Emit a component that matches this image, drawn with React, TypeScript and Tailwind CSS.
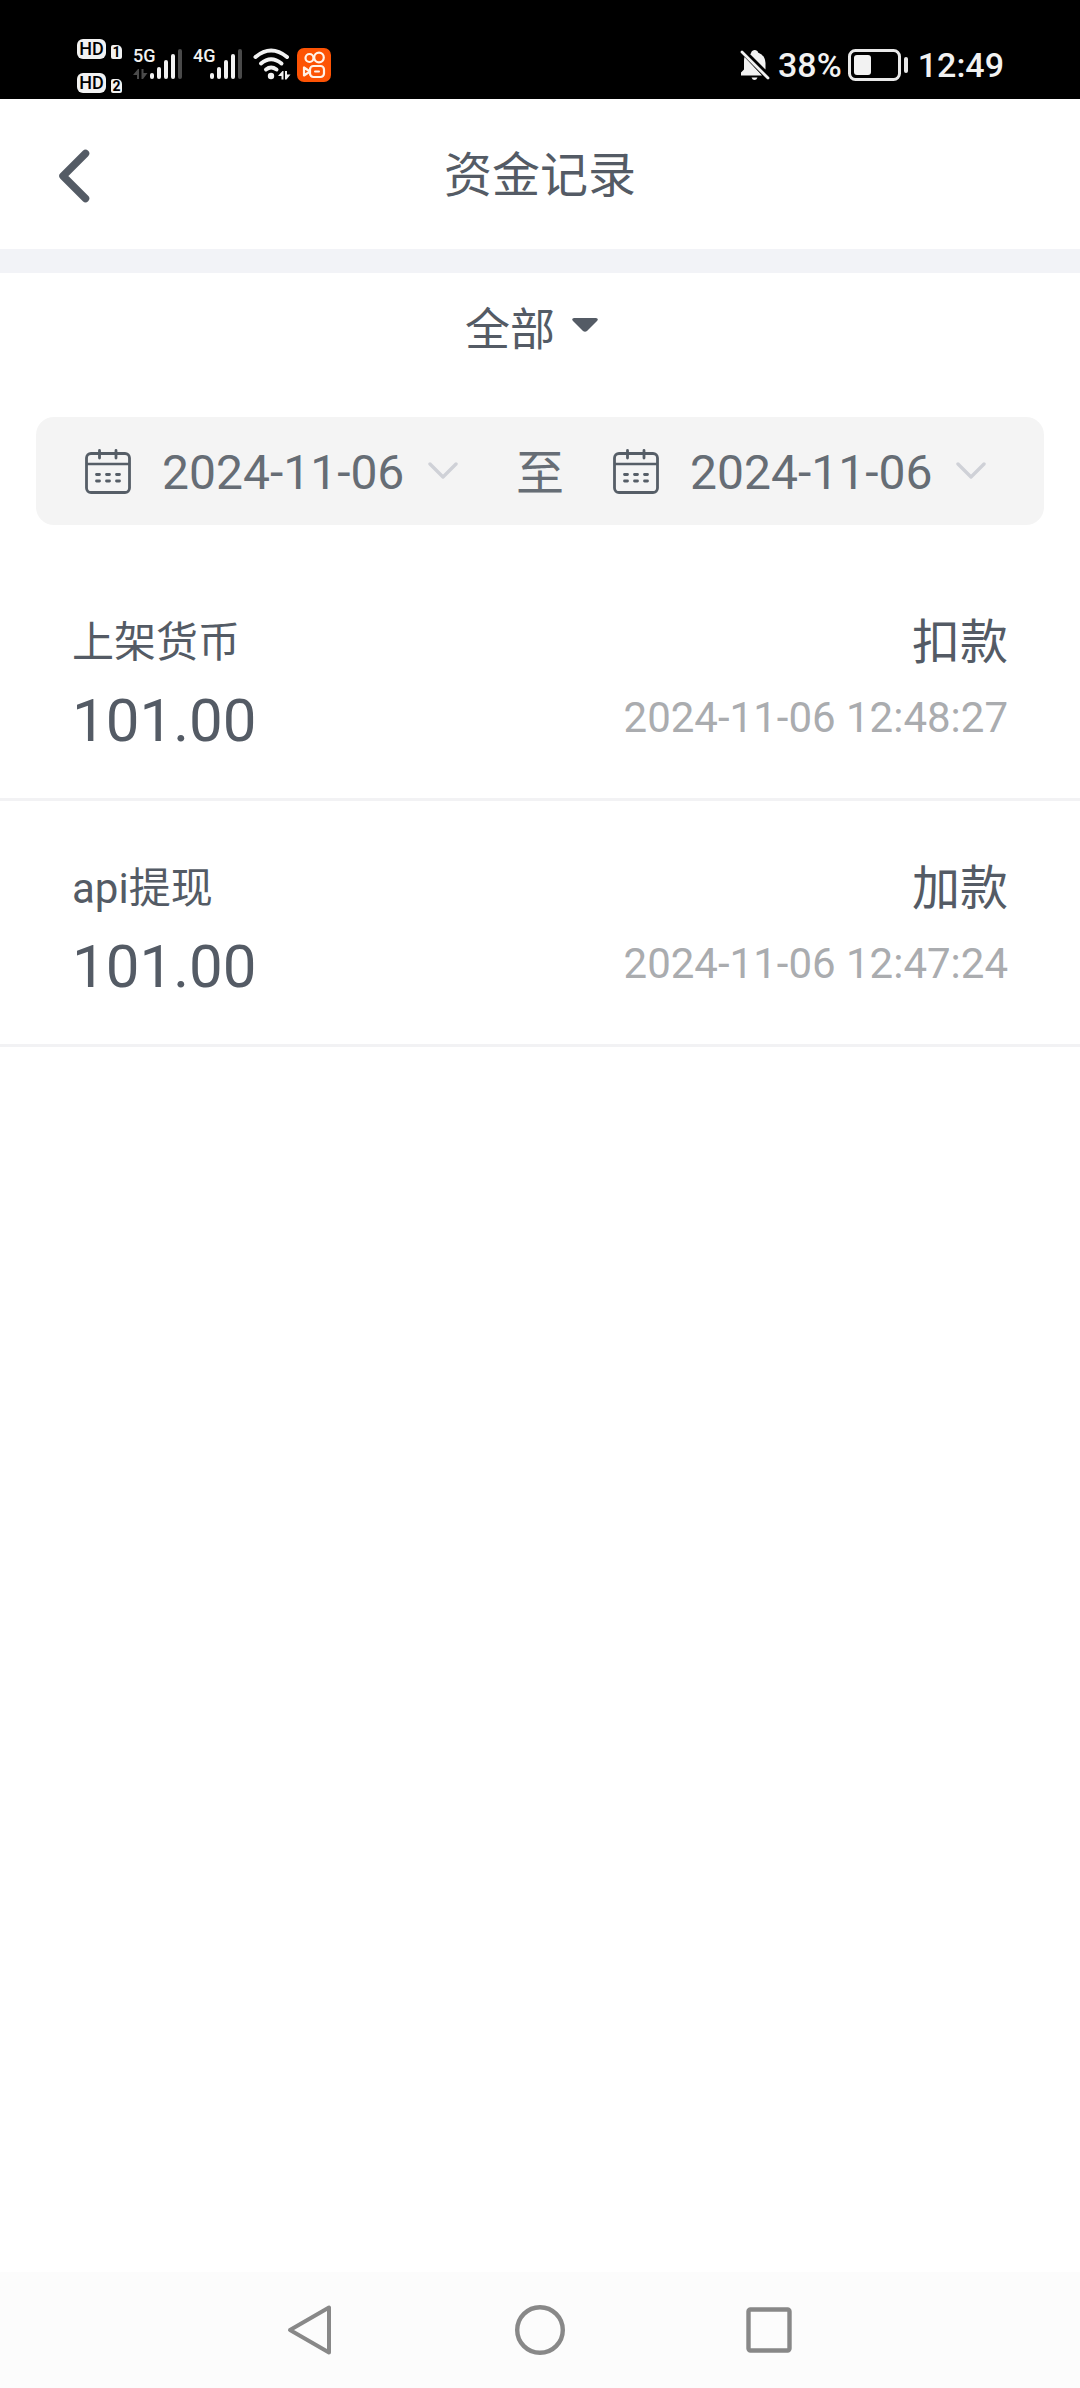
import React from 'react';

const records = [
  { id: 1, label: '上架货币', amount: '101.00', kind: '扣款', time: '2024-11-06 12:48:27' },
  { id: 2, label: 'api提现', amount: '101.00', kind: '加款', time: '2024-11-06 12:47:24' },
];

function HdBadge({ sim }: { sim: string }) {
  return (
    <div className="flex h-[21px] items-end gap-[5px]">
      <span className="flex h-5 w-[29px] items-center justify-center rounded-[6px] bg-[#f2f2f2] font-['Roboto',sans-serif] text-[18px] leading-5 font-medium text-black">
        HD
      </span>
      <span className="flex h-[14px] w-[11px] items-center justify-center rounded-[2px] rounded-tr-[5px] bg-[#f2f2f2] font-['Roboto',sans-serif] text-[14px] leading-[14px] font-bold text-black">
        {sim}
      </span>
    </div>
  );
}

function Signal({ label, arrows }: { label: string; arrows?: boolean }) {
  return (
    <svg width="50" height="46" viewBox="0 -6 50 46" aria-label={label} role="img">
      <text x="0" y="14" fill="#f2f2f2" className="font-['Roboto',sans-serif] text-[18px] font-medium">
        {label}
      </text>
      {arrows && (
        <g fill="#4a4a4a">
          <path d="M0 27 L5 21 L6 21 V31 H4 V27 Z" />
          <path d="M8.500 21 H10.500 V25 H14.500 L10 31 H8.500 Z" />
        </g>
      )}
      <g fill="#f2f2f2">
        <rect x="17" y="25" width="4" height="6" rx="2" />
        <rect x="24" y="19" width="4" height="12" rx="2" />
        <rect x="31" y="12" width="4" height="19" rx="2" />
        <rect x="38" y="6" width="4" height="25" rx="2" />
      </g>
      <rect x="45" y="1" width="4" height="30" rx="2" fill="#4a4a4a" />
    </svg>
  );
}

function WifiIcon() {
  return (
    <svg width="38" height="34" viewBox="0 0 38 34" aria-label="Wi-Fi" role="img">
      <g fill="none" stroke="#f2f2f2" strokeWidth="4" strokeLinecap="round">
        <path d="M2.500 9 Q18 -4 34 9" />
        <path d="M8 15.500 Q18 7 28.500 15.500" />
        <path d="M13 21.500 Q18 17.500 23.500 21.500" />
      </g>
      <circle cx="18" cy="28" r="3.200" fill="#f2f2f2" />
      <path d="M25 28 L29.500 23 H30.500 V31.500 H28.500 V28 Z" fill="#f2f2f2" />
      <path d="M32 23 H34 V26.500 H37.500 L33.500 31.500 H32 Z" fill="#f2f2f2" />
    </svg>
  );
}

function VideoAppIcon() {
  return (
    <svg width="34" height="34" viewBox="0 0 34 34" aria-hidden="true">
      <rect width="34" height="34" rx="7" fill="#fd5304" />
      <g fill="none" stroke="#fff3ea" strokeWidth="2.200" strokeLinejoin="round">
        <circle cx="12.500" cy="10" r="4" />
        <circle cx="22" cy="9.500" r="4.800" />
        <rect x="13" y="18" width="14" height="11" rx="3.500" />
        <path d="M13 23.500 L7 19.500 V27.500 Z" />
      </g>
      <path d="M18 23.500 H22" stroke="#fff3ea" strokeWidth="2" strokeLinecap="round" />
    </svg>
  );
}

function MutedBellIcon() {
  return (
    <svg width="30" height="32" viewBox="0 0 30 32" aria-label="静音" role="img">
      <path
        d="M11 4.500 Q11 1.500 14.500 1 Q18 1.500 18 3.500 Q25 6 25.500 14 V20.500 L10 5 Z"
        fill="#f2f2f2"
      />
      <path d="M4.500 8 L22 26.500 H1 V23.500 L4 20.500 V12 Q4 9.500 4.500 8 Z" fill="#f2f2f2" />
      <path d="M2 3 L28 29" stroke="#f2f2f2" strokeWidth="2.800" strokeLinecap="round" />
      <path d="M11.500 28.500 H17.500 Q16.500 31 14.500 31 Q12.500 31 11.500 28.500 Z" fill="#f2f2f2" />
    </svg>
  );
}

function BatteryIcon() {
  return (
    <svg width="62" height="34" viewBox="0 0 62 34" aria-hidden="true">
      <rect x="1.500" y="2.500" width="50" height="29" rx="6" fill="none" stroke="#e8e8e8" strokeWidth="3" />
      <rect x="6" y="7" width="17" height="20" rx="3" fill="#f2f2f2" />
      <rect x="56" y="9" width="4" height="16" rx="2" fill="#e8e8e8" />
    </svg>
  );
}

function StatusBar() {
  return (
    <div className="flex h-[99px] items-end justify-between bg-black pr-[76px] pb-1.5 pl-[77px]">
      <div className="flex h-14 items-center">
        <div className="flex flex-col gap-[13px]">
          <HdBadge sim="1" />
          <HdBadge sim="2" />
        </div>
        <div className="ml-[11px] flex items-center">
          <Signal label="5G" arrows />
          <div className="ml-[10px] flex items-center">
            <Signal label="4G" />
          </div>
          <div className="mr-1.5 ml-[10px]">
            <WifiIcon />
          </div>
          <VideoAppIcon />
        </div>
      </div>
      <div className="flex h-14 items-center text-[34px] leading-10 font-medium text-[#f2f2f2]">
        <MutedBellIcon />
        <span className="ml-2">38%</span>
        <div className="mr-2 ml-1.5">
          <BatteryIcon />
        </div>
        <span>12:49</span>
      </div>
    </div>
  );
}

function CalendarIcon() {
  return (
    <svg width="48" height="48" viewBox="0 0 48 48" fill="none" stroke="#565e67" strokeLinecap="round" aria-hidden="true">
      <rect x="2.500" y="6.500" width="43" height="39" rx="4.500" strokeWidth="2.800" />
      <path d="M3 17 H45" strokeWidth="2.400" />
      <path d="M15.500 3.500 V11 M32 3.500 V11" strokeWidth="2.800" />
      <path
        d="M12.500 27.500 H15.500 M22.500 27.500 H25.500 M32.500 27.500 H35.500 M12.500 34 H15.500 M22.500 34 H25.500 M32.500 34 H35.500"
        strokeWidth="2.800"
      />
    </svg>
  );
}

function DateField({ name, value }: { name: string; value: string }) {
  return (
    <div className="flex flex-1">
      <button type="button" aria-label={`${name} ${value}`} className="flex items-center pl-12 text-[48px] leading-[60px] text-[#666d75]">
        <CalendarIcon />
        <span className="mr-6 ml-[30px] pt-1">{value}</span>
        <svg width="30" height="20" viewBox="0 0 30 20" fill="none" aria-hidden="true">
          <path d="M2 3 L15 16 L28 3" stroke="#cfd1d7" strokeWidth="3.400" strokeLinecap="round" strokeLinejoin="round" />
        </svg>
      </button>
    </div>
  );
}

export default function App() {
  return (
    <div className="flex min-h-screen flex-col bg-white font-['Roboto','Noto_Sans_CJK_SC',sans-serif] text-[#545b65]">
      <StatusBar />

      <header className="grid h-[150px] grid-cols-[1fr_auto_1fr] items-center pt-1">
        <button type="button" aria-label="返回" className="ml-12 flex h-16 w-14 items-center justify-center">
          <svg width="36" height="56" viewBox="0 0 36 56" fill="none" aria-hidden="true">
            <path d="M27.500 5.500 L5 28 L27.500 50.500" stroke="#545b65" strokeWidth="7.500" strokeLinecap="round" strokeLinejoin="round" />
          </svg>
        </button>
        <h1 className="text-[48px] leading-[60px]">资金记录</h1>
      </header>

      <main className="flex-1 border-t-24 border-[#f2f3f7]">
        <div className="flex justify-center pt-7 pr-4">
          <div className="flex items-center">
            <select
              aria-label="类型"
              defaultValue="all"
              className="field-sizing-content appearance-none bg-transparent text-[45px] leading-[60px]"
            >
              <option value="all">全部</option>
            </select>
            <svg className="mb-3 ml-4" width="28" height="16" viewBox="0 0 28 16" aria-hidden="true">
              <path d="M3 1 H25 Q28 1.500 26 4 L16 14 Q14 15.500 12 14 L2 4 Q0 1.500 3 1 Z" fill="#545b65" />
            </svg>
          </div>
        </div>

        <div className="mx-9 mt-14 flex h-[108px] items-center rounded-[18px] bg-[#f4f4f4]">
          <DateField name="开始日期" value="2024-11-06" />
          <span className="pt-1.5 text-[48px] leading-[60px] text-[#666d75]">至</span>
          <DateField name="结束日期" value="2024-11-06" />
        </div>

        <ul className="mt-[30px]">
          {records.map((r) => (
            <li key={r.id} className="flex justify-between border-b-3 border-[#f2f2f4] px-[72px] pt-[58px] pb-[37px]">
              <div className="flex flex-col gap-2">
                <span className="text-[42px] leading-[60px]">{r.label}</span>
                <span className="text-[60px] leading-[80px]">{r.amount}</span>
              </div>
              <div className="flex flex-col gap-2 text-right">
                <span className="text-[48px] leading-[60px]">{r.kind}</span>
                <time className="text-[42px] leading-[74px] text-[#aaacaf]">{r.time}</time>
              </div>
            </li>
          ))}
        </ul>
      </main>

      <nav aria-label="系统导航" className="flex h-[116px] items-center justify-center gap-[173px] bg-[#fcfcfc]">
        <button type="button" aria-label="返回">
          <svg width="56" height="56" viewBox="0 0 56 56" fill="none" stroke="#888" strokeWidth="4" strokeLinejoin="round" aria-hidden="true">
            <path d="M46 5.500 V50.500 L7 28 Z" />
          </svg>
        </button>
        <button type="button" aria-label="主页">
          <svg width="56" height="56" viewBox="0 0 56 56" fill="none" stroke="#888" strokeWidth="4.400" aria-hidden="true">
            <circle cx="28" cy="28" r="22.800" />
          </svg>
        </button>
        <button type="button" aria-label="最近任务">
          <svg width="56" height="56" viewBox="0 0 56 56" fill="none" stroke="#888" strokeWidth="4.400" aria-hidden="true">
            <rect x="7.500" y="7.500" width="41" height="41" rx="2" />
          </svg>
        </button>
      </nav>
    </div>
  );
}
